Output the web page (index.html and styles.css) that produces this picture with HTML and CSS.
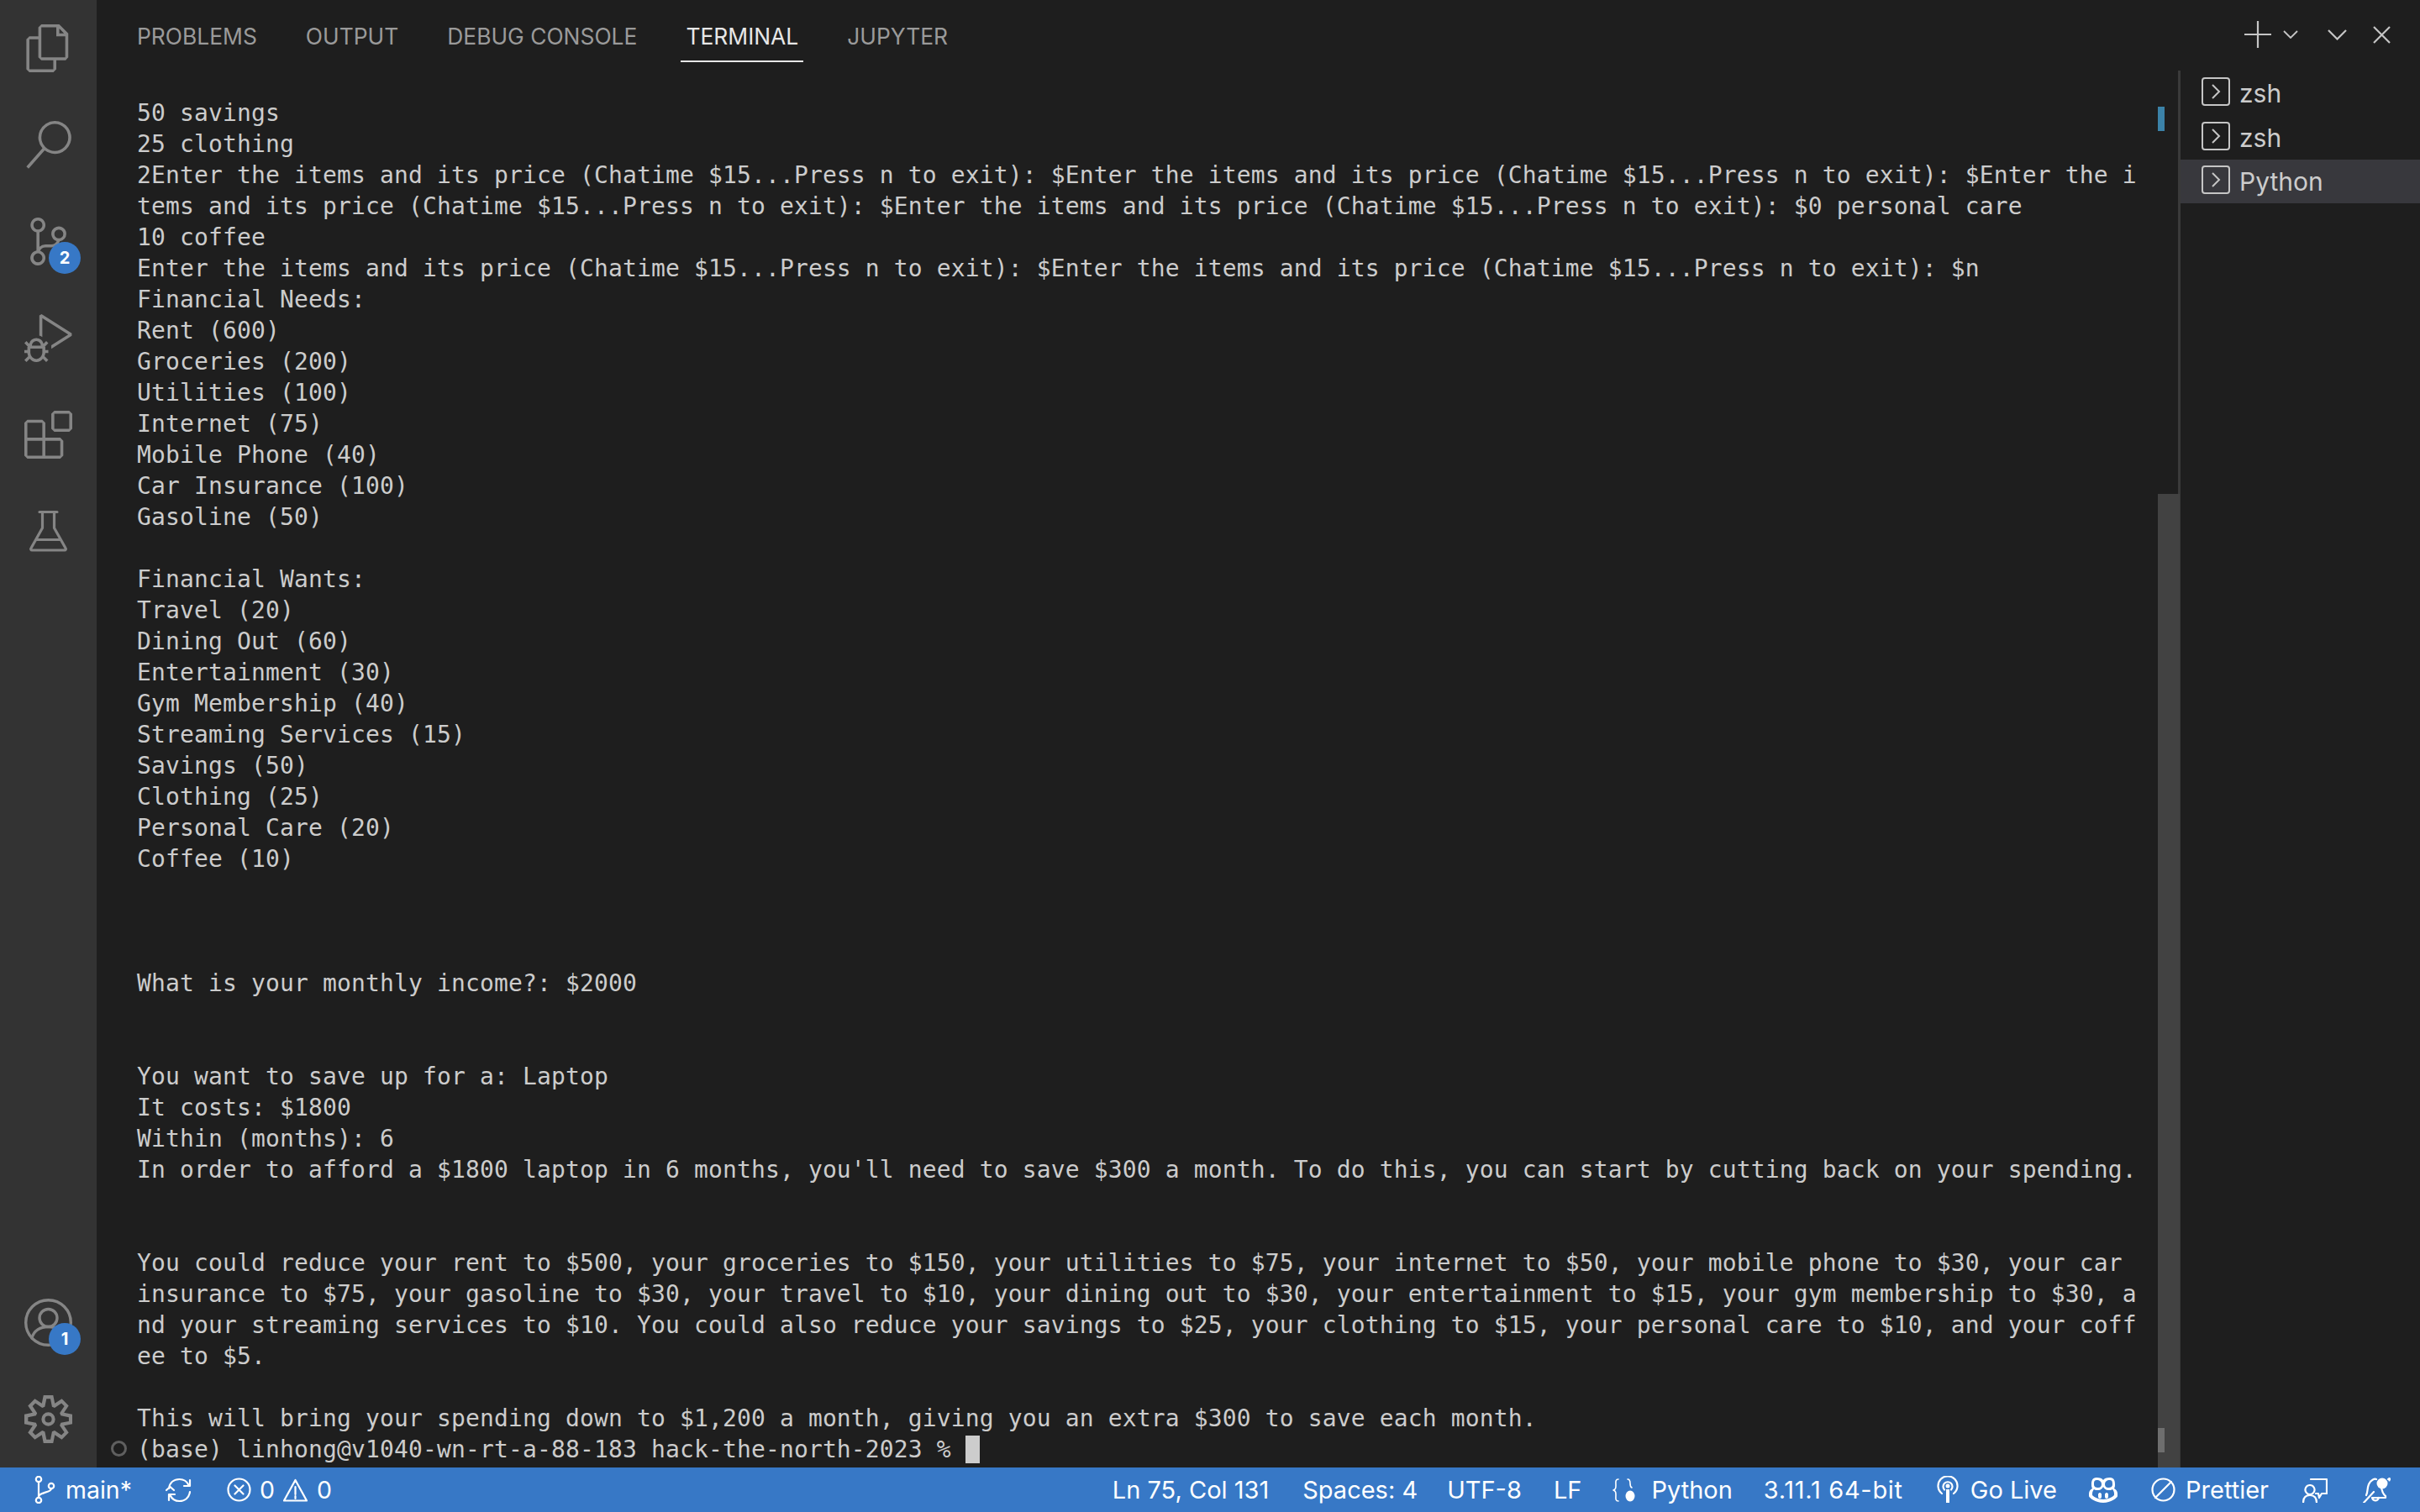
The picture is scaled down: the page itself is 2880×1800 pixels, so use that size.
FILE: index.html
```html
<!DOCTYPE html>
<html lang="en">
<head>
<meta charset="utf-8">
<title>Terminal</title>
<link rel="stylesheet" href="styles.css">
</head>
<body>
<div class="app">
  <div class="main">
    <nav class="activity">
      <div class="act-group">
        <div class="act-item"><svg class="act-icon" viewBox="0 0 24 24"><path fill-rule="evenodd" d="M17.5 0h-9L7 1.5V6H2.5L1 7.5v15.07L2.5 24h12.07L16 22.57V18h4.7l1.3-1.43V4.5L17.5 0zm0 2.12l2.38 2.38H17.5V2.12zm-3 20.38h-12v-15H7v9.07L8.5 18h6v4.5zm6-6h-12v-15H16V6h4.5v10.5z"/></svg></div>
        <div class="act-item"><svg class="act-icon" viewBox="0 0 24 24"><path fill-rule="evenodd" d="M15.25 0a8.25 8.25 0 0 0-6.18 13.72L1 22.88l1.12 1 8.05-9.12A8.251 8.251 0 1 0 15.25.01V0zm0 15a6.75 6.75 0 1 1 0-13.5 6.75 6.75 0 0 1 0 13.5z"/></svg></div>
        <div class="act-item"><svg class="act-icon" viewBox="0 0 24 24"><path fill-rule="evenodd" d="M21.007 8.222A3.738 3.738 0 0 0 15.045 5.2a3.737 3.737 0 0 0 1.156 6.583 2.988 2.988 0 0 1-2.668 1.67h-2.99a4.456 4.456 0 0 0-2.989 1.165V7.4a3.737 3.737 0 1 0-1.494 0v9.117a3.776 3.776 0 1 0 1.816.099 2.99 2.99 0 0 1 2.668-1.667h2.99a4.484 4.484 0 0 0 4.223-3.039 3.736 3.736 0 0 0 3.25-3.687zM4.565 3.738a2.242 2.242 0 1 1 4.484 0 2.242 2.242 0 0 1-4.484 0zm4.484 16.441a2.242 2.242 0 1 1-4.484 0 2.242 2.242 0 0 1 4.484 0zm8.221-9.715a2.242 2.242 0 1 1 0-4.485 2.242 2.242 0 0 1 0 4.485z"/></svg><span class="badge badge-sc">2</span></div>
        <div class="act-item"><svg class="act-icon" viewBox="0 0 24 24"><path fill-rule="evenodd" d="M10.94 13.5l-1.32 1.32a3.73 3.73 0 0 0-7.24 0L1.06 13.5 0 14.56l1.72 1.72-.22.22V18H0v1.5h1.5v.08c.077.489.214.966.41 1.42L0 22.94 1.06 24l1.65-1.65A4.308 4.308 0 0 0 6 24a4.31 4.31 0 0 0 3.29-1.65L10.94 24 12 22.94 10.09 21c.198-.464.336-.951.41-1.45v-.05H12V18h-1.5v-1.5l-.22-.22L12 14.56l-1.06-1.06zM6 13.5a2.25 2.25 0 0 1 2.25 2.25h-4.5A2.25 2.25 0 0 1 6 13.5zm3 6a3.33 3.33 0 0 1-3 3 3.33 3.33 0 0 1-3-3v-2.25h6v2.25zm14.76-9.9v1.26L13.5 17.37v-1.77l8.5-5.37L9 2v9.46a5.07 5.07 0 0 0-1.5-.72V.63L8.64 0l15.12 9.6z"/></svg></div>
        <div class="act-item"><svg class="act-icon" viewBox="0 0 24 24"><path fill-rule="evenodd" d="M13.5 1.5L15 0h7.5L24 1.5V9l-1.5 1.5H15L13.5 9V1.5zm1.5 0V9h7.5V1.5H15zM0 15V6l1.5-1.5H9L10.5 6v7.5H18l1.5 1.5v7.5L18 24H1.5L0 22.5V15zm9-1.5V6H1.5v7.5H9zM9 15H1.5v7.5H9V15zm1.5 7.5H18V15h-7.5v7.5z"/></svg></div>
        <div class="act-item"><svg class="act-icon" viewBox="0 0 57 57"><path class="line" d="M18 5.500h21M21.500 5.500v19L8 48.500a1.500 1.500 0 0 0 1.300 2.500h38.400a1.500 1.500 0 0 0 1.300-2.500L35.500 24.500v-19M15 38.500h27" stroke-width="3.200"/></svg></div>
      </div>
      <div class="act-group">
        <div class="act-item"><svg class="act-icon" viewBox="0 0 57 57"><circle class="line" cx="28.500" cy="28.500" r="26.800" stroke-width="3.400"/><circle class="line" cx="28.500" cy="23" r="10.500" stroke-width="3.400"/><path class="line" d="M9 47c2-9 10-13.500 19.500-13.500S46 38 48 47" stroke-width="3.400"/></svg><span class="badge badge-acc">1</span></div>
        <div class="act-item"><svg class="act-icon" viewBox="0 0 24 24"><path fill-rule="evenodd" d="M19.850 8.750l4.150.83v4.840l-4.150.83 2.350 3.520-3.430 3.430-3.520-2.350-.83 4.150H9.580l-.83-4.150-3.520 2.350-3.430-3.430 2.350-3.520L0 14.420V9.580l4.150-.83L1.800 5.230 5.230 1.800l3.520 2.350L9.580 0h4.840l.83 4.150 3.520-2.350 3.430 3.430-2.350 3.520zm-1.570 5.070l4-.81v-2l-4-.81-.54-1.300 2.290-3.430-1.430-1.430-3.430 2.290-1.300-.54-.81-4h-2l-.81 4-1.300.54-3.430-2.290-1.430 1.430L6.380 8.900l-.54 1.300-4 .81v2l4 .81.54 1.300-2.290 3.430 1.430 1.430 3.430-2.290 1.300.54.81 4h2l.81-4 1.300-.54 3.430 2.290 1.430-1.430-2.290-3.430.54-1.300zM12 8.570A3.430 3.430 0 1 1 12 15.430 3.430 3.430 0 0 1 12 8.570zm0 1.720a1.710 1.710 0 1 0 0 3.420 1.710 1.710 0 0 0 0-3.420z"/></svg></div>
      </div>
    </nav>
    <section class="panel">
      <header class="tabs">
        <div class="tab-list">
          <span class="tab">PROBLEMS</span>
          <span class="tab">OUTPUT</span>
          <span class="tab">DEBUG CONSOLE</span>
          <span class="tab tab-active">TERMINAL</span>
          <span class="tab">JUPYTER</span>
        </div>
        <div class="tab-actions">
          <svg class="ta-plus" viewBox="0 0 32 32"><path class="tline" d="M16 0v32M0 16h32" stroke-width="2.200"/></svg>
          <svg class="ta-small" viewBox="0 0 18 10"><path class="tline" d="M1 1l8 8 8-8" stroke-width="1.800"/></svg>
          <svg class="ta-chev" viewBox="0 0 23 13"><path class="tline" d="M1 1l10.500 10.500L22 1" stroke-width="2.200"/></svg>
          <svg class="ta-close" viewBox="0 0 21 21"><path class="tline" d="M1 1l19 19M20 1L1 20" stroke-width="2.200"/></svg>
        </div>
      </header>
      <div class="body">
        <div class="terminal">
<div class="tl">50 savings</div>
<div class="tl">25 clothing</div>
<div class="tl">2Enter the items and its price (Chatime $15...Press n to exit): $Enter the items and its price (Chatime $15...Press n to exit): $Enter the i</div>
<div class="tl">tems and its price (Chatime $15...Press n to exit): $Enter the items and its price (Chatime $15...Press n to exit): $0 personal care</div>
<div class="tl">10 coffee</div>
<div class="tl">Enter the items and its price (Chatime $15...Press n to exit): $Enter the items and its price (Chatime $15...Press n to exit): $n</div>
<div class="tl">Financial Needs:</div>
<div class="tl">Rent (600)</div>
<div class="tl">Groceries (200)</div>
<div class="tl">Utilities (100)</div>
<div class="tl">Internet (75)</div>
<div class="tl">Mobile Phone (40)</div>
<div class="tl">Car Insurance (100)</div>
<div class="tl">Gasoline (50)</div>
<div class="tl"> </div>
<div class="tl">Financial Wants:</div>
<div class="tl">Travel (20)</div>
<div class="tl">Dining Out (60)</div>
<div class="tl">Entertainment (30)</div>
<div class="tl">Gym Membership (40)</div>
<div class="tl">Streaming Services (15)</div>
<div class="tl">Savings (50)</div>
<div class="tl">Clothing (25)</div>
<div class="tl">Personal Care (20)</div>
<div class="tl">Coffee (10)</div>
<div class="tl"> </div>
<div class="tl"> </div>
<div class="tl"> </div>
<div class="tl">What is your monthly income?: $2000</div>
<div class="tl"> </div>
<div class="tl"> </div>
<div class="tl">You want to save up for a: Laptop</div>
<div class="tl">It costs: $1800</div>
<div class="tl">Within (months): 6</div>
<div class="tl">In order to afford a $1800 laptop in 6 months, you'll need to save $300 a month. To do this, you can start by cutting back on your spending.</div>
<div class="tl"> </div>
<div class="tl"> </div>
<div class="tl">You could reduce your rent to $500, your groceries to $150, your utilities to $75, your internet to $50, your mobile phone to $30, your car</div>
<div class="tl">insurance to $75, your gasoline to $30, your travel to $10, your dining out to $30, your entertainment to $15, your gym membership to $30, a</div>
<div class="tl">nd your streaming services to $10. You could also reduce your savings to $25, your clothing to $15, your personal care to $10, and your coff</div>
<div class="tl">ee to $5.</div>
<div class="tl"> </div>
<div class="tl">This will bring your spending down to $1,200 a month, giving you an extra $300 to save each month.</div>
<div class="tl tl-prompt"><span class="prompt-dot"></span>(base) linhong@v1040-wn-rt-a-88-183 hack-the-north-2023 % <span class="cursor"></span></div>
        </div>
        <div class="scroll-track">
          <span class="scroll-mark"></span>
          <div class="scroll-thumb"><span class="scroll-end"></span></div>
        </div>
        <aside class="term-list">
          <div class="term-row"><svg class="term-icon" viewBox="0 0 34 34"><rect class="tline" x="1" y="1" width="32" height="32" rx="3" stroke-width="2"/><path class="tline" d="M13 9l8 8-8 8" stroke-width="2"/></svg><span>zsh</span></div>
          <div class="term-row"><svg class="term-icon" viewBox="0 0 34 34"><rect class="tline" x="1" y="1" width="32" height="32" rx="3" stroke-width="2"/><path class="tline" d="M13 9l8 8-8 8" stroke-width="2"/></svg><span>zsh</span></div>
          <div class="term-row term-row-active"><svg class="term-icon" viewBox="0 0 34 34"><rect class="tline" x="1" y="1" width="32" height="32" rx="3" stroke-width="2"/><path class="tline" d="M13 9l8 8-8 8" stroke-width="2"/></svg><span>Python</span></div>
        </aside>
      </div>
    </section>
  </div>
  <footer class="status">
    <div class="st-left">
      <span class="st-item st-branch"><svg class="st-icon i-branch" viewBox="0 0 26 33"><circle class="sline" cx="6" cy="4" r="3.200"/><circle class="sline" cx="6" cy="29" r="3.200"/><circle class="sline" cx="21" cy="12" r="3.200"/><path class="sline" d="M6 7.200v18.600M21 15.200c0 5-15 4-15 10"/></svg>main*</span>
      <span class="st-item st-sync"><svg class="st-icon i-sync" viewBox="0 0 33 30"><path class="sline" d="M4 13C5 6 10 2 16.500 2c5 0 9 2.500 11 7M29 17c-1 7-6 11-12.500 11-5 0-9-2.500-11-7M29 3v7h-7M1 15l4.500-4L10 15M4 27v-7h7"/></svg></span>
      <span class="st-item st-err"><svg class="st-icon i-err" viewBox="0 0 29 29"><circle class="sline" cx="14.500" cy="14.500" r="13"/><path class="sline" d="M9.500 9.500l10 10M19.500 9.500l-10 10"/></svg>0</span>
      <span class="st-item st-warn"><svg class="st-icon i-warn" viewBox="0 0 29 28"><path class="sline" d="M14.500 2L28 26.500H1zM14.500 10v9M14.500 21v3"/></svg>0</span>
    </div>
    <div class="st-right">
      <span class="st-item">Ln 75, Col 131</span>
      <span class="st-item">Spaces: 4</span>
      <span class="st-item st-utf">UTF-8</span>
      <span class="st-item st-lf">LF</span>
      <span class="st-item st-lang"><svg class="st-icon i-lang" viewBox="0 0 28 28"><path class="sline sthin" d="M7 1C3 1 4 5 4 8s0 5-3 6c3 1 3 3 3 6s-1 7 3 7M18 1c3 0 3 3 3 5s0 4 2 5"/><ellipse class="sfill" cx="21" cy="21" rx="5.500" ry="6.500"/></svg>Python</span>
      <span class="st-item st-version">3.11.1 64-bit</span>
      <span class="st-item st-live"><svg class="st-icon i-live" viewBox="0 0 26 33"><path class="sline" d="M6 21A11.500 11.500 0 1 1 20 21M9 16.500a5.500 5.500 0 1 1 8 0"/><circle class="sfill" cx="13" cy="12" r="2.500"/><path class="sfill" d="M11 16h4v16h-4z"/></svg>Go Live</span>
      <span class="st-item st-copilot"><svg class="st-icon i-copilot" viewBox="0 0 34 30"><path class="sfill" fill-rule="evenodd" d="M9 0c4 0 7 1 8 3 1-2 4-3 8-3 5 0 6 4 6 8 0 2 0 3-1 5 2 1 4 3 4 6v3c0 2-8 8-17 8S0 24 0 22v-3c0-3 2-5 4-6-1-2-1-3-1-5 0-4 1-8 6-8zm0 3C6 3 6 6 6 8c0 3 2 4 5 4 3 0 4-2 4-4 0-3-2-5-6-5zm16 0c-4 0-6 2-6 5 0 2 1 4 4 4 3 0 5-1 5-4 0-2 0-5-3-5zM17 11c-1 2-3 4-6 4-2 0-4 0-5-1-1 1-2 3-2 5v2c2 2 7 5 13 5s11-3 13-5v-2c0-2-1-4-2-5-1 1-3 1-5 1-3 0-5-2-6-4zm-4 7c1 0 2 1 2 2v3c0 1-1 2-2 2s-2-1-2-2v-3c0-1 1-2 2-2zm8 0c1 0 2 1 2 2v3c0 1-1 2-2 2s-2-1-2-2v-3c0-1 1-2 2-2z"/></svg></span>
      <span class="st-item st-prettier"><svg class="st-icon i-prettier" viewBox="0 0 29 29"><circle class="sline" cx="14.500" cy="14.500" r="13"/><path class="sline" d="M5 24L24 5"/></svg>Prettier</span>
      <span class="st-item"><svg class="st-icon i-feedback" viewBox="0 0 30 30"><path class="sline" d="M10 2h19v17h-6l-3 5-1-5h-3M9 9a5.500 5.500 0 1 1-.01 0M1 30c0-6 3-9 8-9s8 3 8 9"/></svg></span>
      <span class="st-item st-bell"><svg class="st-icon i-bell" viewBox="0 0 33 30"><path class="sline" d="M1 30l12-13M4 21c2-4 1-8 3-13s7-7 9-6M22 12c1 4 1 7 5 10v2H11M11 24c1 4 6 5 8 0"/><circle class="sfill" cx="23" cy="7" r="6.500"/><path class="sline" d="M30 2h3M31.500 .5v3"/></svg></span>
    </div>
  </footer>
</div>
</body>
</html>
```
FILE: styles.css
```css
* { box-sizing: border-box; }
html, body { margin: 0; height: 100%; }
body { background: #1e1e1e; overflow: hidden; font-family: Inter, "Liberation Sans", sans-serif; }
.app { display: flex; flex-direction: column; width: 2880px; height: 1800px; }
.main { display: flex; flex: 1; min-height: 0; }

.activity { width: 115px; flex: none; background: #333333; display: flex; flex-direction: column; justify-content: space-between; }
.act-group { display: flex; flex-direction: column; }
.act-item { position: relative; width: 115px; height: 115px; display: flex; align-items: center; justify-content: center; }
.act-icon { width: 57px; height: 57px; fill: #858585; }
.line { fill: none; stroke: #858585; stroke-linejoin: round; stroke-linecap: round; }
.badge { position: absolute; left: 58px; top: 58px; width: 38px; height: 38px; background: #3778c6; color: #fff; border-radius: 50%; font-size: 20px; font-weight: 700; display: flex; align-items: center; justify-content: center; }

.panel { flex: 1; min-width: 0; display: flex; flex-direction: column; background: #1e1e1e; }
.tabs { height: 84px; flex: none; display: flex; justify-content: space-between; }
.tab-list { display: flex; align-items: flex-start; gap: 58px; padding-left: 48px; }
.tab { font-size: 26.400px; line-height: 30px; padding: 28px 0 14px; color: #9a9a9a; border-bottom: 2px solid transparent; height: 74px; }
.tab-active { color: #e7e7e7; border-bottom-color: #e7e7e7; padding-left: 6px; padding-right: 6px; margin: 0 -6px; }
.tab-actions { display: flex; align-items: center; padding: 0 35px 0 0; height: 82px; }
.tline { fill: none; stroke: #c5c5c5; }
.ta-plus { width: 32px; height: 32px; }
.ta-small { width: 18px; height: 10px; margin-left: 14px; }
.ta-chev { width: 23px; height: 13px; margin-left: 35px; }
.ta-close { width: 21px; height: 21px; margin-left: 31px; }

.body { flex: 1; min-height: 0; display: flex; }
.terminal { flex: 1; min-width: 0; padding: 32px 0 0 48px; font-family: "DejaVu Sans Mono", "Liberation Mono", monospace; font-size: 28px; letter-spacing: 0.140px; color: #cccccc; }
.tl { height: 37px; line-height: 37px; white-space: pre; position: relative; }
.prompt-dot { position: absolute; left: -31px; top: 8px; width: 19px; height: 19px; border: 3px solid #5f5f5f; border-radius: 50%; }
.cursor { display: inline-block; width: 17px; height: 33px; background: #cccccc; vertical-align: -7px; }

.scroll-track { position: relative; width: 24px; flex: none; }
.scroll-mark { position: absolute; left: 0; top: 43px; width: 8px; height: 29px; background: #3b82a8; }
.scroll-thumb { position: absolute; left: 0; right: -2px; top: 504px; bottom: 0; background: #424242; }
.scroll-end { position: absolute; left: 0; bottom: 18px; width: 8px; height: 29px; background: #6e6e6e; }

.term-list { width: 288px; flex: none; border-left: 3px solid #3a3a3a; padding-top: 1px; font-size: 30px; color: #cccccc; }
.term-row { height: 52.400px; display: flex; align-items: center; gap: 11px; padding-left: 25px; }
.term-row-active { background: #38383d; }
.term-icon { width: 34px; height: 34px; flex: none; margin-top: -4px; }

.status { height: 53px; flex: none; background: #3778c6; color: #fff; display: flex; justify-content: space-between; font-size: 29px; }
.st-left, .st-right { display: flex; align-items: center; }
.st-left { padding-left: 40px; font-size: 28.500px; }
.st-right { padding-right: 35px; gap: 40px; }
.st-item { display: flex; align-items: center; white-space: nowrap; }
.st-sync { margin-left: 40px; }
.st-err { margin-left: 40px; }
.st-warn { margin-left: 10px; }
.st-utf { margin-left: -5px; }
.st-lf { margin-left: -2px; }
.st-lang { margin-left: -3px; }
.st-version { margin-left: -3px; letter-spacing: 0.700px; }
.st-copilot { margin-left: -2px; }
.st-bell { margin-left: 2px; }
.sline { fill: none; stroke: #fff; stroke-width: 2.200; stroke-linecap: round; stroke-linejoin: round; }
.sthin { stroke-width: 1.600; }
.sfill { fill: #fff; }
.st-icon { flex: none; }
.i-branch { width: 26px; height: 33px; margin-right: 12px; }
.i-sync { width: 33px; height: 30px; }
.i-err { width: 29px; height: 29px; margin-right: 10px; }
.i-warn { width: 29px; height: 28px; margin-right: 11px; }
.i-lang { width: 28px; height: 28px; margin-right: 18px; }
.i-live { width: 26px; height: 33px; margin-right: 14px; }
.i-copilot { width: 34px; height: 30px; }
.i-prettier { width: 29px; height: 29px; margin-right: 12px; }
.i-feedback { width: 30px; height: 30px; }
.i-bell { width: 33px; height: 30px; }
```
